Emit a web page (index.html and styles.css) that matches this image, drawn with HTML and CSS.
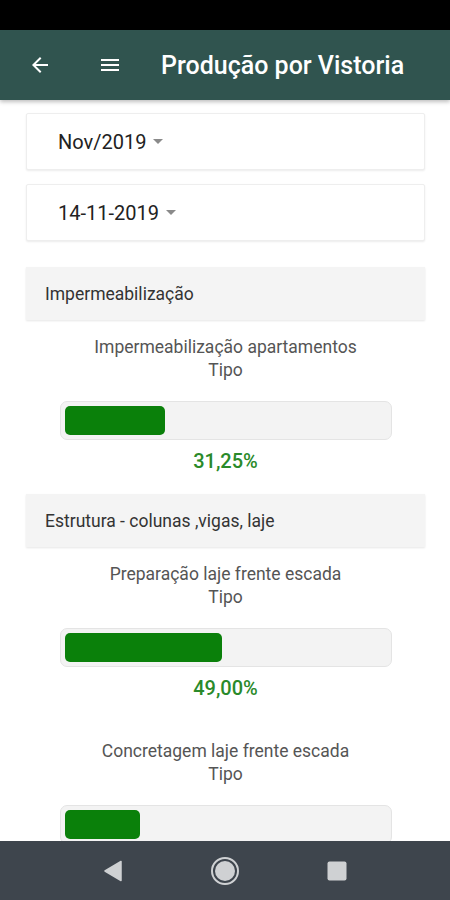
FILE: index.html
```html
<!DOCTYPE html>
<html lang="pt">
<head>
    <meta charset="UTF-8">
    <meta name="viewport" content="width=device-width, initial-scale=1.0">
    <title>Produção por Vistoria</title>
    <link rel="stylesheet" href="styles.css">
</head>
<body>
    <div class="status-bar"></div>

    <header class="toolbar">
        <svg class="tb-icon back" viewBox="0 0 24 24" width="24" height="24">
            <path d="M20 11H7.83l5.59-5.59L12 4l-8 8 8 8 1.41-1.41L7.83 13H20v-2z" fill="#fff"/>
        </svg>
        <svg class="tb-icon menu" viewBox="0 0 24 24" width="24" height="24">
            <path d="M3 18h18v-2H3v2zm0-5h18v-2H3v2zm0-7v2h18V6H3z" fill="#fff"/>
        </svg>
        <h1>Produção por Vistoria</h1>
    </header>

    <main class="content">
        <div class="select-card">
            <span>Nov/2019</span><span class="caret"></span>
        </div>
        <div class="select-card">
            <span>14-11-2019</span><span class="caret"></span>
        </div>

        <section class="group">
            <div class="group-header">Impermeabilização</div>
            <div class="item">
                <div class="item-title">Impermeabilização apartamentos<br>Tipo</div>
                <div class="track"><div class="fill" style="width: 31.25%"></div></div>
                <div class="pct">31,25%</div>
            </div>
        </section>

        <section class="group">
            <div class="group-header">Estrutura - colunas ,vigas, laje</div>
            <div class="item">
                <div class="item-title">Preparação laje frente escada<br>Tipo</div>
                <div class="track"><div class="fill" style="width: 49%"></div></div>
                <div class="pct">49,00%</div>
            </div>
            <div class="item">
                <div class="item-title">Concretagem laje frente escada<br>Tipo</div>
                <div class="track"><div class="fill" style="width: 23.6%"></div></div>
            </div>
        </section>
    </main>

    <nav class="nav-bar">
        <svg viewBox="0 0 20 22" width="20" height="22">
            <path d="M18 1.5v19L2 11z" fill="#cfd1d3" stroke="#cfd1d3" stroke-width="1.5" stroke-linejoin="round"/>
        </svg>
        <svg viewBox="0 0 30 30" width="30" height="30">
            <circle cx="15" cy="15" r="13" fill="none" stroke="#cfd1d3" stroke-width="2"/>
            <circle cx="15" cy="15" r="10" fill="#cfd1d3"/>
        </svg>
        <svg viewBox="0 0 20 20" width="20" height="20">
            <rect x="0.5" y="0.5" width="19" height="19" rx="2" fill="#cfd1d3"/>
        </svg>
    </nav>
</body>
</html>
```

FILE: styles.css
```css
html, body {
    margin: 0;
    padding: 0;
}
body {
    font-family: Roboto, "Noto Sans", sans-serif;
    width: 450px;
    height: 900px;
    display: flex;
    flex-direction: column;
    background: #fff;
    overflow: hidden;
}
.status-bar {
    height: 30px;
    background: #000;
    flex-shrink: 0;
}
.toolbar {
    height: 70px;
    flex-shrink: 0;
    background: #30544f;
    display: flex;
    align-items: center;
    box-shadow: 0 2px 4px rgba(0,0,0,0.25);
    position: relative;
    z-index: 1;
}
.tb-icon.back {
    margin-left: 28px;
}
.tb-icon.menu {
    margin-left: 46px;
}
.toolbar h1 {
    margin: 0 0 0 39px;
    color: #fff;
    font-size: 25px;
    font-weight: 500;
}
.content {
    flex: 1;
    overflow: hidden;
    padding: 13px 25px 0 26px;
}
.select-card {
    height: 57px;
    box-sizing: border-box;
    padding-left: 31px;
    display: flex;
    align-items: center;
    font-size: 20px;
    color: #222;
    background: #fff;
    border: 1px solid #eee;
    border-radius: 2px;
    box-shadow: 0 1px 2px rgba(0,0,0,0.08);
    margin-bottom: 14px;
}
.caret {
    width: 0;
    height: 0;
    margin-left: 7px;
    border-left: 5.5px solid transparent;
    border-right: 5.5px solid transparent;
    border-top: 5.5px solid #8a8a8a;
}
.group:first-of-type {
    margin-top: 26px;
}
.group-header {
    height: 53px;
    box-sizing: border-box;
    padding-left: 19px;
    display: flex;
    align-items: center;
    background: #f4f4f4;
    color: #333;
    font-size: 17.5px;
    box-shadow: 0 1px 2px rgba(0,0,0,0.1);
}
.item {
    padding: 16px 0 22px;
    text-align: center;
}
.item + .item {
    padding-top: 19px;
}
.item-title {
    color: #555;
    font-size: 17.5px;
    line-height: 23px;
}
.track {
    width: 332px;
    height: 39px;
    box-sizing: border-box;
    margin: 19px auto 10px;
    padding: 4px;
    background: #f3f3f3;
    border: 1px solid #e4e4e4;
    border-radius: 7px;
}
.fill {
    height: 29px;
    background: #0a800a;
    border-radius: 5px;
}
.pct {
    color: #2a8a2a;
    font-size: 20px;
    font-weight: 500;
    line-height: 22px;
}
.nav-bar {
    height: 59px;
    flex-shrink: 0;
    background: #3e454d;
    display: flex;
    align-items: center;
    justify-content: space-between;
    padding: 0 103px 0 103px;
}
```
